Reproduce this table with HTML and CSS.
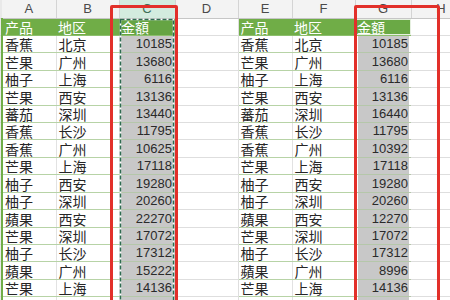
FILE: index.html
```html
<!DOCTYPE html>
<html lang="zh">
<head>
<meta charset="utf-8">
<link rel="stylesheet" href="styles.css">
</head>
<body>
<div class="wrap">
<table class="sheet">
<colgroup>
<col class="c-gut"><col class="c-a"><col class="c-b"><col class="c-c"><col class="c-d"><col class="c-e"><col class="c-f"><col class="c-g"><col class="c-h">
</colgroup>
<tr class="colhead">
<td class="gut"></td><td class="ch">A</td><td class="ch">B</td><td class="ch ch-sel">C</td><td class="ch">D</td><td class="ch">E</td><td class="ch">F</td><td class="ch">G</td><td class="ch">H</td>
</tr>
<tr class="r">
<td class="gut"></td><td class="hd first">产品</td><td class="hd">地区</td><td class="hd hd-c">金額</td><td class="e"></td><td class="hd">产品</td><td class="hd">地区</td><td class="hd hd-g">金額</td><td class="e"></td>
</tr>
<tr class="r"><td class="gut"></td><td class="t first">香蕉</td><td class="t">北京</td><td class="n">10185</td><td class="e"></td><td class="t">香蕉</td><td class="t">北京</td><td class="n ng">10185</td><td class="e"></td></tr>
<tr class="r"><td class="gut"></td><td class="t first">芒果</td><td class="t">广州</td><td class="n">13680</td><td class="e"></td><td class="t">芒果</td><td class="t">广州</td><td class="n ng">13680</td><td class="e"></td></tr>
<tr class="r"><td class="gut"></td><td class="t first">柚子</td><td class="t">上海</td><td class="n">6116</td><td class="e"></td><td class="t">柚子</td><td class="t">上海</td><td class="n ng">6116</td><td class="e"></td></tr>
<tr class="r"><td class="gut"></td><td class="t first">芒果</td><td class="t">西安</td><td class="n">13136</td><td class="e"></td><td class="t">芒果</td><td class="t">西安</td><td class="n ng">13136</td><td class="e"></td></tr>
<tr class="r"><td class="gut"></td><td class="t first">蕃茄</td><td class="t">深圳</td><td class="n">13440</td><td class="e"></td><td class="t">蕃茄</td><td class="t">深圳</td><td class="n ng">16440</td><td class="e"></td></tr>
<tr class="r"><td class="gut"></td><td class="t first">香蕉</td><td class="t">长沙</td><td class="n">11795</td><td class="e"></td><td class="t">香蕉</td><td class="t">长沙</td><td class="n ng">11795</td><td class="e"></td></tr>
<tr class="r"><td class="gut"></td><td class="t first">香蕉</td><td class="t">广州</td><td class="n">10625</td><td class="e"></td><td class="t">香蕉</td><td class="t">广州</td><td class="n ng">10392</td><td class="e"></td></tr>
<tr class="r"><td class="gut"></td><td class="t first">芒果</td><td class="t">上海</td><td class="n">17118</td><td class="e"></td><td class="t">芒果</td><td class="t">上海</td><td class="n ng">17118</td><td class="e"></td></tr>
<tr class="r"><td class="gut"></td><td class="t first">柚子</td><td class="t">西安</td><td class="n">19280</td><td class="e"></td><td class="t">柚子</td><td class="t">西安</td><td class="n ng">19280</td><td class="e"></td></tr>
<tr class="r"><td class="gut"></td><td class="t first">柚子</td><td class="t">深圳</td><td class="n">20260</td><td class="e"></td><td class="t">柚子</td><td class="t">深圳</td><td class="n ng">20260</td><td class="e"></td></tr>
<tr class="r"><td class="gut"></td><td class="t first">蘋果</td><td class="t">西安</td><td class="n">22270</td><td class="e"></td><td class="t">蘋果</td><td class="t">西安</td><td class="n ng">12270</td><td class="e"></td></tr>
<tr class="r"><td class="gut"></td><td class="t first">芒果</td><td class="t">深圳</td><td class="n">17072</td><td class="e"></td><td class="t">芒果</td><td class="t">深圳</td><td class="n ng">17072</td><td class="e"></td></tr>
<tr class="r"><td class="gut"></td><td class="t first">柚子</td><td class="t">长沙</td><td class="n">17312</td><td class="e"></td><td class="t">柚子</td><td class="t">长沙</td><td class="n ng">17312</td><td class="e"></td></tr>
<tr class="r"><td class="gut"></td><td class="t first">蘋果</td><td class="t">广州</td><td class="n">15222</td><td class="e"></td><td class="t">蘋果</td><td class="t">广州</td><td class="n ng">8996</td><td class="e"></td></tr>
<tr class="r"><td class="gut"></td><td class="t first">芒果</td><td class="t">上海</td><td class="n">14136</td><td class="e"></td><td class="t">芒果</td><td class="t">上海</td><td class="n ng">14136</td><td class="e"></td></tr>
<tr class="r"><td class="gut"></td><td class="t first">柚子</td><td class="t">西安</td><td class="n">12930</td><td class="e"></td><td class="t">柚子</td><td class="t">西安</td><td class="n ng">12930</td><td class="e"></td></tr>
</table>

<svg class="ants" width="56" height="290" viewBox="0 0 56 290">
  <rect x="1.5" y="1.5" width="53" height="300" fill="none" stroke="#ffffff" stroke-width="1.5"/>
  <rect x="1.5" y="1.5" width="53" height="300" fill="none" stroke="#2f6b50" stroke-width="1.5" stroke-dasharray="4 2"/>
</svg>
<div class="redbox redbox-left"></div>
<div class="redbox redbox-right"></div>
</div>
</body>
</html>
```

FILE: styles.css
```css
html, body {
  margin: 0;
  padding: 0;
  background: #ffffff;
}

.wrap {
  position: relative;
  width: 450px;
  height: 300px;
  overflow: hidden;
}

.sheet {
  border-collapse: collapse;
  table-layout: fixed;
  width: 471px;
}

.c-gut { width: 2px; }
.c-a { width: 54px; }
.c-b { width: 63px; }
.c-c { width: 56px; }
.c-d { width: 63px; }
.c-e { width: 54px; }
.c-f { width: 63px; }
.c-g { width: 56px; }
.c-h { width: 60px; }

.sheet td {
  padding: 0 2px;
  white-space: nowrap;
  overflow: hidden;
  vertical-align: bottom;
  font-family: "Noto Sans CJK SC", "Noto Sans CJK TC", sans-serif;
  font-size: 14px;
  line-height: 16px;
  color: #262626;
}

.colhead {
  height: 18px;
}

.r {
  height: 17.43px;
}

.sheet td.gut {
  padding: 0;
  background: #e9e9e9;
  border-bottom: 1px solid #dadada;
}

.sheet td.ch {
  background: #f3f3f3;
  color: #4a4a4a;
  text-align: center;
  vertical-align: middle;
  font-family: "Liberation Sans", Arial, sans-serif;
  font-size: 13px;
  line-height: 16px;
  border-right: 1px solid #d4d4d4;
  border-bottom: 1px solid #c6c6c6;
}

.sheet td.ch-sel {
  background: #d3ecdf;
  color: #3f6f58;
}

.sheet td.hd {
  background: #70ad47;
  color: #ffffff;
  border-bottom: 1px solid #8cbf6c;
}

.sheet td.hd-c {
  background: #65a443;
}

.sheet td.hd-g {
  background: #6aa945;
  box-shadow: inset 0 0 0 1px #e6f0e0;
}

.sheet td.t {
  border-bottom: 1px solid #b7d3a6;
  border-right: 1px solid #e2e2e2;
}

.sheet td.first {
  border-left: 2px solid #70ad47;
}

.sheet td.n {
  background: #c8c8c8;
  text-align: right;
  padding-right: 3px;
  font-family: "Liberation Sans", Arial, sans-serif;
  font-size: 13px;
  color: #2a2a2a;
  border-bottom: 1px solid #b5c7aa;
}

.sheet td.ng {
  box-shadow: inset -2px 0 0 #ffffff, inset 2px 0 0 #ffffff;
}

.sheet td.e {
  border-bottom: 1px solid #dedede;
  border-right: 1px solid #dedede;
}

.ants {
  position: absolute;
  left: 119px;
  top: 18px;
}

.redbox {
  position: absolute;
  top: 5px;
  height: 310px;
  border: 3px solid #e2302a;
  border-radius: 2px;
  box-sizing: border-box;
}

.redbox-left {
  left: 110px;
  width: 68px;
}

.redbox-right {
  left: 354px;
  width: 86px;
}
```
